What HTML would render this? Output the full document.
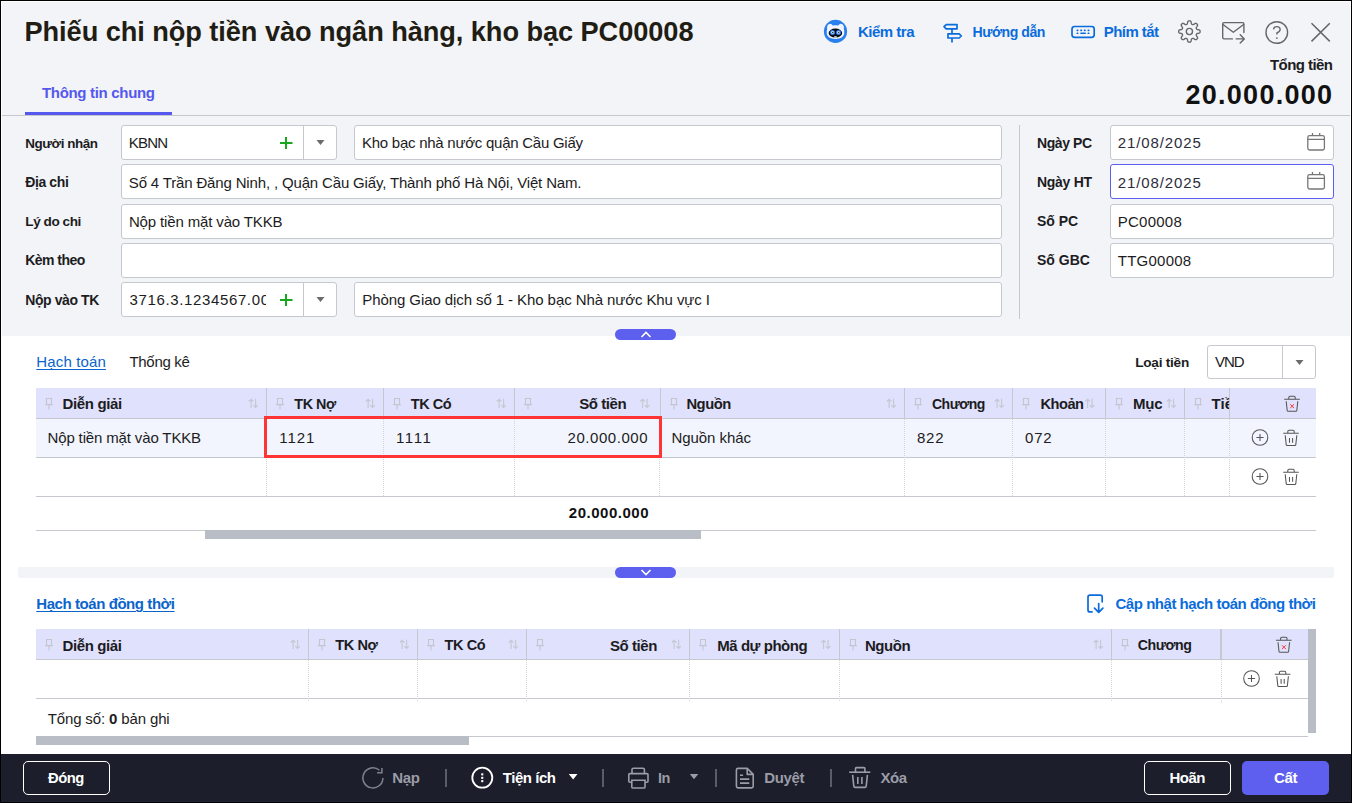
<!DOCTYPE html>
<html><head><meta charset="utf-8">
<style>
*{box-sizing:border-box;margin:0;padding:0}
html,body{width:1352px;height:803px;overflow:hidden;background:#000}
body{position:relative;font-family:"Liberation Sans",sans-serif}
.win{position:absolute;left:1px;top:1px;width:1350px;height:801px;background:#fff}
.a{position:absolute}
.t{position:absolute;white-space:nowrap;font-family:"Liberation Sans",sans-serif}
.inp{position:absolute;background:#fff;border:1px solid #c6c8d0;border-radius:3px}
.hl{position:absolute;height:1px;background:#c6c8d0}
.vl{position:absolute;width:1px;background:#c6c8d0}
.dv{position:absolute;width:1px;background-image:linear-gradient(#d3d5dc 50%,transparent 50%);background-size:1px 2px}
svg{position:absolute;overflow:visible}
</style></head><body>
<div class="win"></div>
<!-- top bg -->
<div class="a" style="left:2px;top:2px;width:1348px;height:334px;background:#f3f4f8"></div>
<div class="a" style="left:2px;top:115px;width:1348px;height:1px;background:#c6c8d0"></div>
<div class="a" style="left:25px;top:112px;width:147px;height:3px;background:#5557ee"></div>
<!-- form inputs -->
<div class="inp" style="left:121px;top:125px;width:216px;height:35px"></div>
<div class="vl" style="left:303px;top:125px;height:35px"></div>
<div class="inp" style="left:354px;top:125px;width:648px;height:35px"></div>
<div class="inp" style="left:121px;top:164px;width:881px;height:35px"></div>
<div class="inp" style="left:121px;top:204px;width:881px;height:35px"></div>
<div class="inp" style="left:121px;top:243px;width:881px;height:35px"></div>
<div class="inp" style="left:121px;top:282px;width:216px;height:35px"></div>
<div class="vl" style="left:303px;top:282px;height:35px"></div>
<div class="inp" style="left:354px;top:282px;width:648px;height:35px"></div>
<div class="a" style="left:266px;top:283px;width:14px;height:33px;background:#fff"></div>
<!-- plus & triangles -->
<svg style="left:0;top:0" width="1" height="1">
 <g stroke="#18a820" stroke-width="2"><path d="M280 143H292.5M286 137V149"/><path d="M280 300H292.5M286 294V306"/></g>
 <g fill="#6b6b6b"><path d="M316.5 140H324.5L320.5 145Z"/><path d="M316.5 297H324.5L320.5 302Z"/></g>
</svg>
<div class="vl" style="left:1019px;top:125px;height:194px"></div>
<div class="inp" style="left:1110px;top:125px;width:224px;height:35px"></div>
<div class="inp" style="left:1110px;top:164px;width:224px;height:35px;border-color:#5b5ef0"></div>
<div class="inp" style="left:1110px;top:204px;width:224px;height:35px"></div>
<div class="inp" style="left:1110px;top:243px;width:224px;height:35px"></div>
<svg style="left:0;top:0" width="1" height="1">
 <g fill="none" stroke="#777" stroke-width="1.3">
  <rect x="1307.8" y="135.6" width="16.6" height="14.4" rx="1.8"/><path d="M1307.8 139.3H1324.4M1312.5 133V136M1319.7 133V136"/>
  <rect x="1307.8" y="174.6" width="16.6" height="14.4" rx="1.8"/><path d="M1307.8 178.3H1324.4M1312.5 172V175M1319.7 172V175"/>
 </g>
</svg>
<!-- collapse pill -->
<div class="a" style="left:615px;top:329px;width:61px;height:11px;border-radius:6px;background:#5d5fef"></div>
<svg style="left:0;top:0" width="1" height="1"><path d="M641.5 337L646 332.5L650.5 337" fill="none" stroke="#fff" stroke-width="1.6"/></svg>

<!-- loai tien combo -->
<div class="inp" style="left:1207px;top:345px;width:109px;height:34px"></div>
<div class="vl" style="left:1282px;top:345px;height:34px"></div>

<!-- GRID 1 -->
<div class="a" style="left:36px;top:388px;width:1280px;height:30px;background:#e0e1fc"></div>
<div class="hl" style="left:36px;top:418px;width:1280px"></div>
<div class="a" style="left:36px;top:419px;width:1280px;height:38px;background:#f2f5fe"></div>
<div class="hl" style="left:36px;top:457px;width:1280px"></div>
<div class="hl" style="left:36px;top:496px;width:1280px"></div>
<div class="hl" style="left:36px;top:530px;width:1280px"></div>
<div class="a" style="left:205px;top:530px;width:496px;height:9px;background:#b9bdc5"></div>
<!-- header separators -->
<div class="vl" style="left:266px;top:388px;height:30px"></div>
<div class="vl" style="left:383px;top:388px;height:30px"></div>
<div class="vl" style="left:514px;top:388px;height:30px"></div>
<div class="vl" style="left:660px;top:388px;height:30px"></div>
<div class="vl" style="left:904px;top:388px;height:30px"></div>
<div class="vl" style="left:1012px;top:388px;height:30px"></div>
<div class="vl" style="left:1105px;top:388px;height:30px"></div>
<div class="vl" style="left:1184px;top:388px;height:30px"></div>
<div class="vl" style="left:1229px;top:388px;height:30px"></div>
<!-- body dotted separators -->
<div class="dv" style="left:266px;top:419px;height:77px"></div>
<div class="dv" style="left:383px;top:419px;height:77px"></div>
<div class="dv" style="left:514px;top:419px;height:77px"></div>
<div class="dv" style="left:659px;top:419px;height:77px"></div>
<div class="dv" style="left:904px;top:419px;height:77px"></div>
<div class="dv" style="left:1012px;top:419px;height:77px"></div>
<div class="dv" style="left:1105px;top:419px;height:77px"></div>
<div class="dv" style="left:1184px;top:419px;height:77px"></div>
<div class="dv" style="left:1229px;top:419px;height:77px"></div>
<!-- red rect -->
<div class="a" style="left:264px;top:416px;width:398px;height:42px;border:3px solid #ff3535"></div>

<!-- band + pill 2 -->
<div class="a" style="left:18px;top:567px;width:1316px;height:11px;border-radius:2px;background:#f3f4f8"></div>
<div class="a" style="left:615px;top:567px;width:61px;height:11px;border-radius:6px;background:#5d5fef"></div>
<svg style="left:0;top:0" width="1" height="1"><path d="M641.5 570L646 574.5L650.5 570" fill="none" stroke="#fff" stroke-width="1.6"/></svg>

<!-- GRID 2 -->
<div class="a" style="left:36px;top:629px;width:1272px;height:30px;background:#e0e1fc"></div>
<div class="hl" style="left:36px;top:659px;width:1272px"></div>
<div class="hl" style="left:36px;top:698px;width:1272px"></div>
<div class="hl" style="left:36px;top:736px;width:1272px"></div>
<div class="a" style="left:36px;top:736px;width:433px;height:9px;background:#b9bdc5"></div>
<div class="a" style="left:1308px;top:629px;width:8px;height:104px;background:#b9bdc5"></div>
<div class="vl" style="left:308px;top:629px;height:30px"></div>
<div class="vl" style="left:417px;top:629px;height:30px"></div>
<div class="vl" style="left:526px;top:629px;height:30px"></div>
<div class="vl" style="left:689px;top:629px;height:30px"></div>
<div class="vl" style="left:839px;top:629px;height:30px"></div>
<div class="vl" style="left:1111px;top:629px;height:30px"></div>
<div class="vl" style="left:1220px;top:629px;height:30px;width:2px"></div>
<div class="dv" style="left:308px;top:660px;height:42px"></div>
<div class="dv" style="left:417px;top:660px;height:42px"></div>
<div class="dv" style="left:526px;top:660px;height:42px"></div>
<div class="dv" style="left:689px;top:660px;height:42px"></div>
<div class="dv" style="left:839px;top:660px;height:42px"></div>
<div class="dv" style="left:1111px;top:660px;height:42px"></div>
<div class="dv" style="left:1221px;top:660px;height:44px"></div>

<!-- FOOTER -->
<div class="a" style="left:1px;top:754px;width:1350px;height:48px;background:#1f2030"></div>
<div class="a" style="left:2px;top:754px;width:1348px;height:47px;background:#1c1e2b"></div>
<div class="a" style="left:23px;top:761px;width:87px;height:34px;border:1.5px solid #fff;border-radius:5px"></div>
<div class="a" style="left:1144px;top:761px;width:87px;height:34px;border:1.5px solid #fff;border-radius:5px"></div>
<div class="a" style="left:1242px;top:761px;width:87px;height:34px;background:#5e5fee;border-radius:5px"></div>
<div class="a" style="left:445px;top:769px;width:2px;height:18px;background:#5a5d68"></div>
<div class="a" style="left:602px;top:769px;width:2px;height:18px;background:#5a5d68"></div>
<div class="a" style="left:715px;top:769px;width:2px;height:18px;background:#5a5d68"></div>
<div class="a" style="left:830px;top:769px;width:2px;height:18px;background:#5a5d68"></div>
<svg style="left:0;top:0" width="1" height="1"><path d="M1295.5 360H1303.5L1299.5 365Z" fill="#6b6b6b"/></svg>
<!--ICONS-->

<svg style="left:0;top:0" width="1" height="1">
 <circle cx="835.5" cy="31.4" r="11.6" fill="#2a80ee"/>
 <path d="M827.2 29Q826.4 24.6 829.6 23.9Q831.6 23.6 832.8 25.6Q835.5 25 838.2 25.6Q839.4 23.6 841.4 23.9Q844.6 24.6 843.8 29Q844.6 31 844.2 34Q843 38.9 835.5 38.9Q828 38.9 826.8 34Q826.4 31 827.2 29Z" fill="#f0f5ff"/>
 <ellipse cx="835.4" cy="33.1" rx="6.8" ry="4.5" fill="#0a0a12"/>
 <circle cx="832.5" cy="32.4" r="2.5" fill="#2a80ee"/><circle cx="838.5" cy="32.4" r="2.5" fill="#2a80ee"/>
 <circle cx="832.5" cy="32.4" r="1.3" fill="#dfe8ff"/><circle cx="838.5" cy="32.4" r="1.3" fill="#dfe8ff"/>
 <circle cx="832.7" cy="32.4" r="0.6" fill="#111"/><circle cx="838.7" cy="32.4" r="0.6" fill="#111"/>
 <path d="M834.2 36.3H836.8V37.4H834.2Z" fill="#fff"/>
 <g fill="none" stroke="#0a6cdc" stroke-width="1.7" stroke-linejoin="round">
  <path d="M946.2 24.6H957V28.8H946.2L944 26.7Z"/>
  <path d="M948 33.8H959.2L961.3 36L959.2 38H948Z"/>
  <path d="M952 29V33.8M952 38V42.6"/>
 </g>
 <rect x="1072" y="26.5" width="22.2" height="10.8" rx="2.6" fill="none" stroke="#0a6cdc" stroke-width="1.7"/>
 <g fill="#0a6cdc">
  <rect x="1076.5" y="29.6" width="2" height="1.6" rx=".6"/><rect x="1080.2" y="29.6" width="2" height="1.6" rx=".6"/>
  <rect x="1083.8" y="29.6" width="2" height="1.6" rx=".6"/><rect x="1087.5" y="29.6" width="2" height="1.6" rx=".6"/>
  <rect x="1076.5" y="32.5" width="2" height="1.6" rx=".6"/><rect x="1080.3" y="32.5" width="5.6" height="1.6" rx=".6"/>
  <rect x="1087.5" y="32.5" width="2" height="1.6" rx=".6"/>
 </g>
 <path d="M1189.40 20.80 L1189.59 20.80 L1189.77 20.82 L1189.96 20.85 L1190.14 20.89 L1190.32 20.95 L1190.50 21.04 L1190.67 21.18 L1190.82 21.37 L1190.96 21.65 L1191.07 22.00 L1191.17 22.42 L1191.24 22.85 L1191.31 23.24 L1191.38 23.56 L1191.46 23.79 L1191.56 23.97 L1191.66 24.10 L1191.77 24.19 L1191.89 24.27 L1192.01 24.34 L1192.13 24.40 L1192.25 24.45 L1192.37 24.50 L1192.49 24.55 L1192.62 24.59 L1192.75 24.63 L1192.89 24.66 L1193.03 24.66 L1193.20 24.65 L1193.39 24.59 L1193.62 24.48 L1193.89 24.31 L1194.22 24.08 L1194.57 23.83 L1194.93 23.60 L1195.26 23.43 L1195.55 23.33 L1195.80 23.30 L1196.02 23.33 L1196.21 23.39 L1196.38 23.47 L1196.54 23.57 L1196.69 23.68 L1196.83 23.81 L1196.97 23.93 L1197.09 24.07 L1197.22 24.21 L1197.33 24.36 L1197.43 24.52 L1197.51 24.69 L1197.57 24.88 L1197.60 25.10 L1197.57 25.35 L1197.47 25.64 L1197.30 25.97 L1197.07 26.33 L1196.82 26.68 L1196.59 27.01 L1196.42 27.28 L1196.31 27.51 L1196.25 27.70 L1196.24 27.87 L1196.24 28.01 L1196.27 28.15 L1196.31 28.28 L1196.35 28.41 L1196.40 28.53 L1196.45 28.65 L1196.50 28.77 L1196.56 28.89 L1196.63 29.01 L1196.71 29.13 L1196.80 29.24 L1196.93 29.34 L1197.11 29.44 L1197.34 29.52 L1197.66 29.59 L1198.05 29.66 L1198.48 29.73 L1198.90 29.83 L1199.25 29.94 L1199.53 30.08 L1199.72 30.23 L1199.86 30.40 L1199.95 30.58 L1200.01 30.76 L1200.05 30.94 L1200.08 31.13 L1200.10 31.31 L1200.10 31.50 L1200.10 31.69 L1200.08 31.87 L1200.05 32.06 L1200.01 32.24 L1199.95 32.42 L1199.86 32.60 L1199.72 32.77 L1199.53 32.92 L1199.25 33.06 L1198.90 33.17 L1198.48 33.27 L1198.05 33.34 L1197.66 33.41 L1197.34 33.48 L1197.11 33.56 L1196.93 33.66 L1196.80 33.76 L1196.71 33.87 L1196.63 33.99 L1196.56 34.11 L1196.50 34.23 L1196.45 34.35 L1196.40 34.47 L1196.35 34.59 L1196.31 34.72 L1196.27 34.85 L1196.24 34.99 L1196.24 35.13 L1196.25 35.30 L1196.31 35.49 L1196.42 35.72 L1196.59 35.99 L1196.82 36.32 L1197.07 36.67 L1197.30 37.03 L1197.47 37.36 L1197.57 37.65 L1197.60 37.90 L1197.57 38.12 L1197.51 38.31 L1197.43 38.48 L1197.33 38.64 L1197.22 38.79 L1197.09 38.93 L1196.97 39.07 L1196.83 39.19 L1196.69 39.32 L1196.54 39.43 L1196.38 39.53 L1196.21 39.61 L1196.02 39.67 L1195.80 39.70 L1195.55 39.67 L1195.26 39.57 L1194.93 39.40 L1194.57 39.17 L1194.22 38.92 L1193.89 38.69 L1193.62 38.52 L1193.39 38.41 L1193.20 38.35 L1193.03 38.34 L1192.89 38.34 L1192.75 38.37 L1192.62 38.41 L1192.49 38.45 L1192.37 38.50 L1192.25 38.55 L1192.13 38.60 L1192.01 38.66 L1191.89 38.73 L1191.77 38.81 L1191.66 38.90 L1191.56 39.03 L1191.46 39.21 L1191.38 39.44 L1191.31 39.76 L1191.24 40.15 L1191.17 40.58 L1191.07 41.00 L1190.96 41.35 L1190.82 41.63 L1190.67 41.82 L1190.50 41.96 L1190.32 42.05 L1190.14 42.11 L1189.96 42.15 L1189.77 42.18 L1189.59 42.20 L1189.40 42.20 L1189.21 42.20 L1189.03 42.18 L1188.84 42.15 L1188.66 42.11 L1188.48 42.05 L1188.30 41.96 L1188.13 41.82 L1187.98 41.63 L1187.84 41.35 L1187.73 41.00 L1187.63 40.58 L1187.56 40.15 L1187.49 39.76 L1187.42 39.44 L1187.34 39.21 L1187.24 39.03 L1187.14 38.90 L1187.03 38.81 L1186.91 38.73 L1186.79 38.66 L1186.67 38.60 L1186.55 38.55 L1186.43 38.50 L1186.31 38.45 L1186.18 38.41 L1186.05 38.37 L1185.91 38.34 L1185.77 38.34 L1185.60 38.35 L1185.41 38.41 L1185.18 38.52 L1184.91 38.69 L1184.58 38.92 L1184.23 39.17 L1183.87 39.40 L1183.54 39.57 L1183.25 39.67 L1183.00 39.70 L1182.78 39.67 L1182.59 39.61 L1182.42 39.53 L1182.26 39.43 L1182.11 39.32 L1181.97 39.19 L1181.83 39.07 L1181.71 38.93 L1181.58 38.79 L1181.47 38.64 L1181.37 38.48 L1181.29 38.31 L1181.23 38.12 L1181.20 37.90 L1181.23 37.65 L1181.33 37.36 L1181.50 37.03 L1181.73 36.67 L1181.98 36.32 L1182.21 35.99 L1182.38 35.72 L1182.49 35.49 L1182.55 35.30 L1182.56 35.13 L1182.56 34.99 L1182.53 34.85 L1182.49 34.72 L1182.45 34.59 L1182.40 34.47 L1182.35 34.35 L1182.30 34.23 L1182.24 34.11 L1182.17 33.99 L1182.09 33.87 L1182.00 33.76 L1181.87 33.66 L1181.69 33.56 L1181.46 33.48 L1181.14 33.41 L1180.75 33.34 L1180.32 33.27 L1179.90 33.17 L1179.55 33.06 L1179.27 32.92 L1179.08 32.77 L1178.94 32.60 L1178.85 32.42 L1178.79 32.24 L1178.75 32.06 L1178.72 31.87 L1178.70 31.69 L1178.70 31.50 L1178.70 31.31 L1178.72 31.13 L1178.75 30.94 L1178.79 30.76 L1178.85 30.58 L1178.94 30.40 L1179.08 30.23 L1179.27 30.08 L1179.55 29.94 L1179.90 29.83 L1180.32 29.73 L1180.75 29.66 L1181.14 29.59 L1181.46 29.52 L1181.69 29.44 L1181.87 29.34 L1182.00 29.24 L1182.09 29.13 L1182.17 29.01 L1182.24 28.89 L1182.30 28.77 L1182.35 28.65 L1182.40 28.53 L1182.45 28.41 L1182.49 28.28 L1182.53 28.15 L1182.56 28.01 L1182.56 27.87 L1182.55 27.70 L1182.49 27.51 L1182.38 27.28 L1182.21 27.01 L1181.98 26.68 L1181.73 26.33 L1181.50 25.97 L1181.33 25.64 L1181.23 25.35 L1181.20 25.10 L1181.23 24.88 L1181.29 24.69 L1181.37 24.52 L1181.47 24.36 L1181.58 24.21 L1181.71 24.07 L1181.83 23.93 L1181.97 23.81 L1182.11 23.68 L1182.26 23.57 L1182.42 23.47 L1182.59 23.39 L1182.78 23.33 L1183.00 23.30 L1183.25 23.33 L1183.54 23.43 L1183.87 23.60 L1184.23 23.83 L1184.58 24.08 L1184.91 24.31 L1185.18 24.48 L1185.41 24.59 L1185.60 24.65 L1185.77 24.66 L1185.91 24.66 L1186.05 24.63 L1186.18 24.59 L1186.31 24.55 L1186.43 24.50 L1186.55 24.45 L1186.67 24.40 L1186.79 24.34 L1186.91 24.27 L1187.03 24.19 L1187.14 24.10 L1187.24 23.97 L1187.34 23.79 L1187.42 23.56 L1187.49 23.24 L1187.56 22.85 L1187.63 22.42 L1187.73 22.00 L1187.84 21.65 L1187.98 21.37 L1188.13 21.18 L1188.30 21.04 L1188.48 20.95 L1188.66 20.89 L1188.84 20.85 L1189.03 20.82 L1189.21 20.80Z" fill="none" stroke="#666" stroke-width="1.35" stroke-linejoin="round"/>
 <circle cx="1189.4" cy="31.5" r="3.1" fill="none" stroke="#666" stroke-width="1.35"/>
 <g fill="none" stroke="#666" stroke-width="1.4" stroke-linejoin="round" stroke-linecap="round">
  <path d="M1232.4 38.9H1224Q1222.7 38.9 1222.7 37.6V23.9Q1222.7 22.6 1224 22.6H1242.6Q1243.9 22.6 1243.9 23.9V32.5"/>
  <path d="M1223 24.5L1233.3 32.2L1243.6 24.5"/>
  <path d="M1236.2 38.9H1244.3M1240.2 34.8L1244.3 38.9L1240.2 43"/>
 </g>
 <circle cx="1276.8" cy="32.5" r="10.8" fill="none" stroke="#666" stroke-width="1.4"/>
 <path d="M1273.5 29.4Q1273.8 26.6 1276.8 26.6Q1280.1 26.6 1280.1 29.6Q1280.1 31.8 1276.9 33V34.6" fill="none" stroke="#666" stroke-width="1.4"/>
 <rect x="1276.1" y="37.4" width="1.5" height="1.5" fill="#666"/>
 <path d="M1311.5 23.2L1329.8 41.4M1329.8 23.2L1311.5 41.4" stroke="#666" stroke-width="1.5"/>
</svg>
<svg style="left:0;top:0" width="1" height="1"><path d="M46.5 404.5V398.5H51.5V404.5M45.2 404.6H52.8M49.0 404.6V409.5" fill="none" stroke="#c4c5cf" stroke-width="1.1"/><path d="M251.1 407.9V399.2M248.8 401.5L251.1 399.2L253.4 401.5M255.6 398.7V407.5M253.3 405.2L255.6 407.5L257.9 405.2" fill="none" stroke="#c5c7d2" stroke-width="1.1"/><path d="M277.5 404.5V398.5H282.5V404.5M276.2 404.6H283.8M280.0 404.6V409.5" fill="none" stroke="#c4c5cf" stroke-width="1.1"/><path d="M368.1 407.9V399.2M365.8 401.5L368.1 399.2L370.4 401.5M372.6 398.7V407.5M370.3 405.2L372.6 407.5L374.9 405.2" fill="none" stroke="#c5c7d2" stroke-width="1.1"/><path d="M394.5 404.5V398.5H399.5V404.5M393.2 404.6H400.8M397.0 404.6V409.5" fill="none" stroke="#c4c5cf" stroke-width="1.1"/><path d="M499.1 407.9V399.2M496.8 401.5L499.1 399.2L501.4 401.5M503.6 398.7V407.5M501.3 405.2L503.6 407.5L505.9 405.2" fill="none" stroke="#c5c7d2" stroke-width="1.1"/><path d="M525.5 404.5V398.5H530.5V404.5M524.2 404.6H531.8M528.0 404.6V409.5" fill="none" stroke="#c4c5cf" stroke-width="1.1"/><path d="M642.6 407.9V399.2M640.3 401.5L642.6 399.2L644.9 401.5M647.1 398.7V407.5M644.8 405.2L647.1 407.5L649.4 405.2" fill="none" stroke="#c5c7d2" stroke-width="1.1"/><path d="M671.5 404.5V398.5H676.5V404.5M670.2 404.6H677.8M674.0 404.6V409.5" fill="none" stroke="#c4c5cf" stroke-width="1.1"/><path d="M889.1 407.9V399.2M886.8 401.5L889.1 399.2L891.4 401.5M893.6 398.7V407.5M891.3 405.2L893.6 407.5L895.9 405.2" fill="none" stroke="#c5c7d2" stroke-width="1.1"/><path d="M915.5 404.5V398.5H920.5V404.5M914.2 404.6H921.8M918.0 404.6V409.5" fill="none" stroke="#c4c5cf" stroke-width="1.1"/><path d="M997.1 407.9V399.2M994.8 401.5L997.1 399.2L999.4 401.5M1001.6 398.7V407.5M999.3 405.2L1001.6 407.5L1003.9 405.2" fill="none" stroke="#c5c7d2" stroke-width="1.1"/><path d="M1023.5 404.5V398.5H1028.5V404.5M1022.2 404.6H1029.8M1026.0 404.6V409.5" fill="none" stroke="#c4c5cf" stroke-width="1.1"/><path d="M1087.6 407.9V399.2M1085.3 401.5L1087.6 399.2L1089.9 401.5M1092.1 398.7V407.5M1089.8 405.2L1092.1 407.5L1094.4 405.2" fill="none" stroke="#c5c7d2" stroke-width="1.1"/><path d="M1116.5 404.5V398.5H1121.5V404.5M1115.2 404.6H1122.8M1119.0 404.6V409.5" fill="none" stroke="#c4c5cf" stroke-width="1.1"/><path d="M1169.1 407.9V399.2M1166.8 401.5L1169.1 399.2L1171.4 401.5M1173.6 398.7V407.5M1171.3 405.2L1173.6 407.5L1175.9 405.2" fill="none" stroke="#c5c7d2" stroke-width="1.1"/><path d="M1195.5 404.5V398.5H1200.5V404.5M1194.2 404.6H1201.8M1198.0 404.6V409.5" fill="none" stroke="#c4c5cf" stroke-width="1.1"/><path d="M46.5 645.5V639.5H51.5V645.5M45.2 645.6H52.8M49.0 645.6V650.5" fill="none" stroke="#c4c5cf" stroke-width="1.1"/><path d="M293.1 648.9V640.2M290.8 642.5L293.1 640.2L295.4 642.5M297.6 639.7V648.5M295.3 646.2L297.6 648.5L299.9 646.2" fill="none" stroke="#c5c7d2" stroke-width="1.1"/><path d="M319.5 645.5V639.5H324.5V645.5M318.2 645.6H325.8M322.0 645.6V650.5" fill="none" stroke="#c4c5cf" stroke-width="1.1"/><path d="M402.1 648.9V640.2M399.8 642.5L402.1 640.2L404.4 642.5M406.6 639.7V648.5M404.3 646.2L406.6 648.5L408.9 646.2" fill="none" stroke="#c5c7d2" stroke-width="1.1"/><path d="M428.5 645.5V639.5H433.5V645.5M427.2 645.6H434.8M431.0 645.6V650.5" fill="none" stroke="#c4c5cf" stroke-width="1.1"/><path d="M511.1 648.9V640.2M508.8 642.5L511.1 640.2L513.4 642.5M515.6 639.7V648.5M513.3 646.2L515.6 648.5L517.9 646.2" fill="none" stroke="#c5c7d2" stroke-width="1.1"/><path d="M537.5 645.5V639.5H542.5V645.5M536.2 645.6H543.8M540.0 645.6V650.5" fill="none" stroke="#c4c5cf" stroke-width="1.1"/><path d="M674.1 648.9V640.2M671.8 642.5L674.1 640.2L676.4 642.5M678.6 639.7V648.5M676.3 646.2L678.6 648.5L680.9 646.2" fill="none" stroke="#c5c7d2" stroke-width="1.1"/><path d="M700.5 645.5V639.5H705.5V645.5M699.2 645.6H706.8M703.0 645.6V650.5" fill="none" stroke="#c4c5cf" stroke-width="1.1"/><path d="M823.6 648.9V640.2M821.3 642.5L823.6 640.2L825.9 642.5M828.1 639.7V648.5M825.8 646.2L828.1 648.5L830.4 646.2" fill="none" stroke="#c5c7d2" stroke-width="1.1"/><path d="M850.5 645.5V639.5H855.5V645.5M849.2 645.6H856.8M853.0 645.6V650.5" fill="none" stroke="#c4c5cf" stroke-width="1.1"/><path d="M1096.1 648.9V640.2M1093.8 642.5L1096.1 640.2L1098.4 642.5M1100.6 639.7V648.5M1098.3 646.2L1100.6 648.5L1102.9 646.2" fill="none" stroke="#c5c7d2" stroke-width="1.1"/><path d="M1122.5 645.5V639.5H1127.5V645.5M1121.2 645.6H1128.8M1125.0 645.6V650.5" fill="none" stroke="#c4c5cf" stroke-width="1.1"/></svg><svg style="left:0;top:0" width="1" height="1"><path d="M1284.2 399.2H1299.8M1288.8 399.2V397.4Q1288.8 396.2 1290.0 396.2H1294.0Q1295.2 396.2 1295.2 397.4V399.2M1286.2 401.2L1287.2 410.5Q1287.3 411.3 1288.1000000000001 411.3H1295.9Q1296.7 411.3 1296.8 410.5L1297.8 401.2" fill="none" stroke="#555" stroke-width="1.05"/><path d="M1290.2 404.3L1294 408.1M1294 404.3L1290.2 408.1" stroke="#ff3030" stroke-width="1"/><circle cx="1260" cy="437.5" r="7.8" fill="none" stroke="#555" stroke-width="1.05"/><path d="M1256.4 437.5H1263.6M1260 433.9V441.1" stroke="#555" stroke-width="1.05"/><path d="M1283.2 433.3H1298.8M1287.8 433.3V431.5Q1287.8 430.3 1289.0 430.3H1293.0Q1294.2 430.3 1294.2 431.5V433.3M1285.2 435.3L1286.2 444.6Q1286.3 445.40000000000003 1287.1000000000001 445.40000000000003H1294.9Q1295.7 445.40000000000003 1295.8 444.6L1296.8 435.3M1289.5 438.0V442.7M1292.6000000000001 438.0V442.7" fill="none" stroke="#555" stroke-width="1.05"/><circle cx="1260" cy="476.5" r="7.8" fill="none" stroke="#555" stroke-width="1.05"/><path d="M1256.4 476.5H1263.6M1260 472.9V480.1" stroke="#555" stroke-width="1.05"/><path d="M1283.2 472.3H1298.8M1287.8 472.3V470.5Q1287.8 469.3 1289.0 469.3H1293.0Q1294.2 469.3 1294.2 470.5V472.3M1285.2 474.3L1286.2 483.6Q1286.3 484.40000000000003 1287.1000000000001 484.40000000000003H1294.9Q1295.7 484.40000000000003 1295.8 483.6L1296.8 474.3M1289.5 477.0V481.7M1292.6000000000001 477.0V481.7" fill="none" stroke="#555" stroke-width="1.05"/><path d="M1276 640.2H1291.6M1280.6 640.2V638.4000000000001Q1280.6 637.2 1281.8 637.2H1285.8Q1287 637.2 1287 638.4000000000001V640.2M1278 642.2L1279 651.5Q1279.1 652.3000000000001 1279.9 652.3000000000001H1287.7Q1288.5 652.3000000000001 1288.6 651.5L1289.6 642.2" fill="none" stroke="#555" stroke-width="1.05"/><path d="M1282 645.3L1285.8 649.1M1285.8 645.3L1282 649.1" stroke="#ff3030" stroke-width="1"/><circle cx="1251.5" cy="678.5" r="7.8" fill="none" stroke="#555" stroke-width="1.05"/><path d="M1247.9 678.5H1255.1M1251.5 674.9V682.1" stroke="#555" stroke-width="1.05"/><path d="M1274.8 674.3H1290.3999999999999M1279.3999999999999 674.3V672.5Q1279.3999999999999 671.3 1280.6 671.3H1284.6Q1285.8 671.3 1285.8 672.5V674.3M1276.8 676.3L1277.8 685.5999999999999Q1277.8999999999999 686.4 1278.7 686.4H1286.5Q1287.3 686.4 1287.3999999999999 685.5999999999999L1288.3999999999999 676.3M1281.1 679.0V683.6999999999999M1284.2 679.0V683.6999999999999" fill="none" stroke="#555" stroke-width="1.05"/><path d="M1092 611.9H1090Q1088 611.9 1088 609.9V597.1Q1088 595.1 1090 595.1H1100.2Q1102.2 595.1 1102.2 597.1V601.8M1098.7 603.7V612.1M1094.5 608.2L1098.7 612.3L1102.9 608.2" fill="none" stroke="#0a6cdc" stroke-width="1.7" stroke-linecap="round" stroke-linejoin="round"/></svg><svg style="left:0;top:0" width="1" height="1"><path d="M382.9 777.9A10 10 0 1 1 379.4 770.3" fill="none" stroke="#80838f" stroke-width="1.5"/><path d="M381.9 768V772.8H377.1" fill="none" stroke="#80838f" stroke-width="1.5"/><circle cx="482.3" cy="777.7" r="10" fill="none" stroke="#fff" stroke-width="1.8"/><rect x="481.2" y="773.3" width="2.1" height="2.1" fill="#fff"/><rect x="481.2" y="776.8" width="2.1" height="2.1" fill="#fff"/><rect x="481.2" y="780.1" width="2.1" height="2.1" fill="#fff"/><path d="M568.8 774H577.5L573.15 779.5Z" fill="#fff"/><path d="M689.8 774H698.3L694 779.3Z" fill="#9a9ca6"/><g fill="none" stroke="#9a9ca6" stroke-width="1.6"><path d="M632 773V769.6Q632 768.2 633.4 768.2H643Q644.4 768.2 644.4 769.6V773"/><path d="M631.3 782.2H629.8Q628.8 782.2 628.8 781.2V774.6Q628.8 773.6 629.8 773.6H647Q648 773.6 648 774.6V781.2Q648 782.2 647 782.2H645.2"/><path d="M631.8 780.2H645V786.9Q645 788 643.9 788H632.9Q631.8 788 631.8 786.9Z"/></g><g fill="none" stroke="#9a9ca6" stroke-width="1.6" stroke-linejoin="round"><path d="M747.2 768.4H738Q736.4 768.4 736.4 770V786.3Q736.4 787.9 738 787.9H751.6Q753.2 787.9 753.2 786.3V774.4Z"/><path d="M747.2 768.4V774.4H753.2"/><path d="M740 775.2H743.1M740 779.1H749.3M740 783.1H749.3"/></g><g fill="none" stroke="#9a9ca6" stroke-width="1.6"><path d="M849.2 772.2H870.3"/><path d="M855.5 772V768.5Q855.5 767.6 856.4 767.6H864Q864.9 767.6 864.9 768.5V772"/><path d="M852.6 774.8L853.8 786.2Q853.9 787.4 855.1 787.4H864.9Q866.1 787.4 866.2 786.2L867.4 774.8"/><path d="M857.8 777V784M861.9 777V784"/></g></svg>
<div class=t style="top:17.70px;font-size:27.2px;line-height:27.2px;font-weight:700;color:#1f1d14;letter-spacing:-0.068px;left:24.50px;">Phiếu chi nộp tiền vào ngân hàng, kho bạc PC00008</div>
<div class=t style="top:85.00px;font-size:15px;line-height:15px;font-weight:700;color:#5558ee;letter-spacing:-0.319px;left:42.00px;">Thông tin chung</div>
<div class=t style="top:24.00px;font-size:15px;line-height:15px;font-weight:700;color:#0a6cdc;letter-spacing:-0.504px;left:858.00px;">Kiểm tra</div>
<div class=t style="top:24.95px;font-size:14.09px;line-height:14.09px;font-weight:700;color:#0a6cdc;letter-spacing:-0.450px;left:972.50px;">Hướng dẫn</div>
<div class=t style="top:24.00px;font-size:15px;line-height:15px;font-weight:700;color:#0a6cdc;letter-spacing:-0.570px;left:1103.80px;">Phím tắt</div>
<div class=t style="top:57.00px;font-size:15px;line-height:15px;font-weight:700;color:#1c1c22;letter-spacing:-0.562px;left:1270.00px;">Tổng tiền</div>
<div class=t style="top:82.30px;font-size:27px;line-height:27px;font-weight:700;color:#111;letter-spacing:1.262px;left:1185.50px;">20.000.000</div>
<div class=t style="top:136.69px;font-size:13.43px;line-height:13.43px;font-weight:700;color:#1c1c22;letter-spacing:-0.450px;left:25.30px;">Người nhận</div>
<div class=t style="top:175.20px;font-size:14px;line-height:14px;font-weight:700;color:#1c1c22;letter-spacing:-0.401px;left:25.30px;">Địa chi</div>
<div class=t style="top:215.01px;font-size:13.58px;line-height:13.58px;font-weight:700;color:#1c1c22;letter-spacing:-0.450px;left:25.30px;">Lý do chi</div>
<div class=t style="top:253.30px;font-size:14px;line-height:14px;font-weight:700;color:#1c1c22;letter-spacing:-0.542px;left:25.30px;">Kèm theo</div>
<div class=t style="top:292.80px;font-size:14px;line-height:14px;font-weight:700;color:#1c1c22;letter-spacing:-0.420px;left:25.30px;">Nộp vào TK</div>
<div class=t style="top:135.40px;font-size:15px;line-height:15px;font-weight:400;color:#1c1c22;letter-spacing:-0.763px;left:128.80px;">KBNN</div>
<div class=t style="top:135.40px;font-size:15px;line-height:15px;font-weight:400;color:#1c1c22;letter-spacing:-0.254px;left:362.00px;">Kho bạc nhà nước quận Cầu Giấy</div>
<div class=t style="top:174.60px;font-size:15px;line-height:15px;font-weight:400;color:#1c1c22;letter-spacing:-0.157px;left:128.80px;">Số 4 Trần Đăng Ninh, , Quận Cầu Giấy, Thành phố Hà Nội, Việt Nam.</div>
<div class=t style="top:213.80px;font-size:15px;line-height:15px;font-weight:400;color:#1c1c22;letter-spacing:-0.138px;left:128.90px;">Nộp tiền mặt vào TKKB</div>
<div class=t style="top:292.40px;font-size:15px;line-height:15px;font-weight:400;color:#1c1c22;letter-spacing:0.638px;left:129.50px;width:136.5px;overflow:hidden;">3716.3.1234567.00</div>
<div class=t style="top:292.40px;font-size:15px;line-height:15px;font-weight:400;color:#1c1c22;letter-spacing:-0.085px;left:362.30px;">Phòng Giao dịch số 1 - Kho bạc Nhà nước Khu vực I</div>
<div class=t style="top:135.90px;font-size:14px;line-height:14px;font-weight:700;color:#1c1c22;letter-spacing:-0.430px;left:1037.00px;">Ngày PC</div>
<div class=t style="top:175.20px;font-size:14px;line-height:14px;font-weight:700;color:#1c1c22;letter-spacing:-0.299px;left:1037.00px;">Ngày HT</div>
<div class=t style="top:214.30px;font-size:14px;line-height:14px;font-weight:700;color:#1c1c22;letter-spacing:0.000px;left:1037.00px;">Số PC</div>
<div class=t style="top:253.30px;font-size:14px;line-height:14px;font-weight:700;color:#1c1c22;letter-spacing:0.000px;left:1037.00px;">Số GBC</div>
<div class=t style="top:135.40px;font-size:15px;line-height:15px;font-weight:400;color:#2b2d3a;letter-spacing:0.880px;left:1117.80px;">21/08/2025</div>
<div class=t style="top:174.60px;font-size:15px;line-height:15px;font-weight:400;color:#2b2d3a;letter-spacing:0.880px;left:1117.80px;">21/08/2025</div>
<div class=t style="top:213.80px;font-size:15px;line-height:15px;font-weight:400;color:#1c1c22;letter-spacing:0.240px;left:1117.80px;">PC00008</div>
<div class=t style="top:253.00px;font-size:15px;line-height:15px;font-weight:400;color:#1c1c22;letter-spacing:0.240px;left:1117.80px;">TTG00008</div>
<div class=t style="top:354.40px;font-size:15px;line-height:15px;font-weight:400;color:#0b64cc;letter-spacing:0.139px;left:36.30px;text-decoration:underline;text-underline-offset:2px;">Hạch toán</div>
<div class=t style="top:354.40px;font-size:15px;line-height:15px;font-weight:400;color:#1c1c22;letter-spacing:-0.321px;left:129.50px;">Thống kê</div>
<div class=t style="top:356.20px;font-size:13.6px;line-height:13.6px;font-weight:700;color:#1c1c22;letter-spacing:-0.236px;left:1135.20px;">Loại tiền</div>
<div class=t style="top:354.40px;font-size:15px;line-height:15px;font-weight:400;color:#1c1c22;letter-spacing:-0.986px;left:1215.00px;">VND</div>
<div class=t style="top:396.00px;font-size:15px;line-height:15px;font-weight:700;color:#1c1c22;letter-spacing:-0.377px;left:62.60px;">Diễn giải</div>
<div class=t style="top:396.81px;font-size:14.39px;line-height:14.39px;font-weight:700;color:#1c1c22;letter-spacing:-0.450px;left:294.30px;">TK Nợ</div>
<div class=t style="top:396.74px;font-size:14.53px;line-height:14.53px;font-weight:700;color:#1c1c22;letter-spacing:-0.450px;left:410.80px;">TK Có</div>
<div class=t style="top:396.00px;font-size:15px;line-height:15px;font-weight:700;color:#1c1c22;letter-spacing:-0.419px;left:579.20px;">Số tiền</div>
<div class=t style="top:396.61px;font-size:14.78px;line-height:14.78px;font-weight:700;color:#1c1c22;letter-spacing:-0.450px;left:686.40px;">Nguồn</div>
<div class=t style="top:397.00px;font-size:14.0px;line-height:14.0px;font-weight:700;color:#1c1c22;letter-spacing:-0.494px;left:932.00px;">Chương</div>
<div class=t style="top:396.70px;font-size:14.59px;line-height:14.59px;font-weight:700;color:#1c1c22;letter-spacing:-0.450px;left:1040.40px;">Khoản</div>
<div class=t style="top:396.00px;font-size:15px;line-height:15px;font-weight:700;color:#1c1c22;letter-spacing:-0.250px;left:1133.00px;">Mục</div>
<div class=t style="top:396.00px;font-size:15px;line-height:15px;font-weight:700;color:#1c1c22;letter-spacing:0.000px;left:1211.60px;clip-path:inset(-5px calc(100% - 17.5px) -5px -2px);">Tiền</div>
<div class=t style="top:430.20px;font-size:15px;line-height:15px;font-weight:400;color:#1c1c22;letter-spacing:-0.143px;left:47.50px;">Nộp tiền mặt vào TKKB</div>
<div class=t style="top:430.20px;font-size:15px;line-height:15px;font-weight:400;color:#1c1c22;letter-spacing:0.911px;left:279.30px;">1121</div>
<div class=t style="top:430.20px;font-size:15px;line-height:15px;font-weight:400;color:#1c1c22;letter-spacing:1.590px;left:396.00px;">1111</div>
<div class=t style="top:430.20px;font-size:15px;line-height:15px;font-weight:400;color:#1c1c22;letter-spacing:0.547px;left:567.60px;">20.000.000</div>
<div class=t style="top:430.20px;font-size:15px;line-height:15px;font-weight:400;color:#1c1c22;letter-spacing:-0.062px;left:671.50px;">Nguồn khác</div>
<div class=t style="top:430.20px;font-size:15px;line-height:15px;font-weight:400;color:#1c1c22;letter-spacing:0.734px;left:917.00px;">822</div>
<div class=t style="top:430.20px;font-size:15px;line-height:15px;font-weight:400;color:#1c1c22;letter-spacing:0.784px;left:1025.00px;">072</div>
<div class=t style="top:504.90px;font-size:15px;line-height:15px;font-weight:700;color:#111;letter-spacing:0.514px;left:568.80px;">20.000.000</div>
<div class=t style="top:596.40px;font-size:15px;line-height:15px;font-weight:700;color:#0b64cc;letter-spacing:-0.432px;left:36.30px;text-decoration:underline;text-underline-offset:2px;">Hạch toán đồng thời</div>
<div class=t style="top:596.20px;font-size:15px;line-height:15px;font-weight:700;color:#0a6cdc;letter-spacing:-0.469px;left:1115.50px;">Cập nhật hạch toán đồng thời</div>
<div class=t style="top:637.50px;font-size:15px;line-height:15px;font-weight:700;color:#1c1c22;letter-spacing:-0.377px;left:62.50px;">Diễn giải</div>
<div class=t style="top:638.21px;font-size:14.58px;line-height:14.58px;font-weight:700;color:#1c1c22;letter-spacing:-0.450px;left:335.30px;">TK Nợ</div>
<div class=t style="top:638.24px;font-size:14.53px;line-height:14.53px;font-weight:700;color:#1c1c22;letter-spacing:-0.450px;left:444.60px;">TK Có</div>
<div class=t style="top:637.50px;font-size:15px;line-height:15px;font-weight:700;color:#1c1c22;letter-spacing:-0.436px;left:610.00px;">Số tiền</div>
<div class=t style="top:637.50px;font-size:15px;line-height:15px;font-weight:700;color:#1c1c22;letter-spacing:-0.462px;left:717.30px;">Mã dự phòng</div>
<div class=t style="top:637.50px;font-size:15px;line-height:15px;font-weight:700;color:#1c1c22;letter-spacing:-0.446px;left:864.90px;">Nguồn</div>
<div class=t style="top:638.41px;font-size:14.17px;line-height:14.17px;font-weight:700;color:#1c1c22;letter-spacing:-0.450px;left:1137.70px;">Chương</div>
<div class=t style="top:711.30px;font-size:15px;line-height:15px;font-weight:400;color:#1c1c22;letter-spacing:-0.134px;left:47.70px;">Tổng số: <b>0</b> bản ghi</div>
<div class=t style="top:770.82px;font-size:14.77px;line-height:14.77px;font-weight:700;color:#fff;letter-spacing:-0.450px;left:48.00px;">Đóng</div>
<div class=t style="top:770.20px;font-size:15px;line-height:15px;font-weight:700;color:#9a9ca6;letter-spacing:-0.322px;left:392.30px;">Nạp</div>
<div class=t style="top:770.20px;font-size:15px;line-height:15px;font-weight:700;color:#fff;letter-spacing:-0.458px;left:502.80px;">Tiện ích</div>
<div class=t style="top:770.98px;font-size:14.44px;line-height:14.44px;font-weight:700;color:#9a9ca6;letter-spacing:-0.450px;left:658.00px;">In</div>
<div class=t style="top:770.20px;font-size:15px;line-height:15px;font-weight:700;color:#9a9ca6;letter-spacing:-0.347px;left:764.30px;">Duyệt</div>
<div class=t style="top:770.20px;font-size:15px;line-height:15px;font-weight:700;color:#9a9ca6;letter-spacing:-0.508px;left:880.50px;">Xóa</div>
<div class=t style="top:770.20px;font-size:15px;line-height:15px;font-weight:700;color:#fff;letter-spacing:-0.467px;left:1169.40px;">Hoãn</div>
<div class=t style="top:770.20px;font-size:15px;line-height:15px;font-weight:700;color:#fff;letter-spacing:-0.336px;left:1274.00px;">Cất</div>
</body></html>
